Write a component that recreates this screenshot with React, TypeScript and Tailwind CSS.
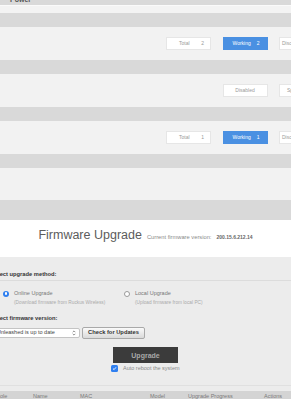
import React from 'react';

interface StatButton {
  label: string;
  count?: number;
  active?: boolean;
  pad?: string;
}

const statRows: StatButton[][] = [
  [
    { label: 'Total', count: 2, pad: 'pl-[12px] pr-[6px]' },
    { label: 'Working', count: 2, active: true, pad: 'pl-[9px] pr-[7px]' },
    { label: 'Disconnected', count: 0, pad: 'pl-[2px] pr-[2px]' },
  ],
  [
    { label: 'Disabled', pad: 'justify-center' },
    { label: 'Spare', pad: 'pl-[7px]' },
  ],
  [
    { label: 'Total', count: 1, pad: 'pl-[12px] pr-[6px]' },
    { label: 'Working', count: 1, active: true, pad: 'pl-[9px] pr-[7px]' },
    { label: 'Disconnected', count: 0, pad: 'pl-[2px] pr-[2px]' },
  ],
];

function Stat({ label, count, active, pad }: StatButton) {
  return (
    <div
      className={`w-[45px] h-[13px] flex items-center overflow-hidden whitespace-nowrap text-[5px] leading-none border ${pad} ${
        active
          ? 'bg-[#4a90e2] border-[#4a90e2] text-white justify-between'
          : 'bg-white border-[#e6e6e6] text-[#9a9a9a] justify-between'
      }`}
    >
      <span>{label}</span>
      {count !== undefined && <span>{count}</span>}
    </div>
  );
}

function Band({ h = 'h-[14px]' }: { h?: string }) {
  return <div className={`${h} bg-[#d9d9d9]`} />;
}

function StatRow({ items }: { items: StatButton[] }) {
  return (
    <div className="h-[33px] flex items-center justify-end gap-[11.5px] pr-[117px] bg-[#f2f2f2]">
      {items.map((b, i) => (
        <Stat key={i} {...b} />
      ))}
    </div>
  );
}

export default function App() {
  return (
    <div className="w-[291px] h-[399px] overflow-hidden bg-[#f2f2f2] font-['Liberation_Sans',Arial,sans-serif]">
      <div className="w-[591px] -ml-[150px]">
        {/* clipped section heading */}
        <div className="h-[5px] bg-[#d9d9d9] overflow-hidden">
          <div className="pl-[160px] -mt-[4px] text-[7px] leading-[8px] font-bold text-[#555]">Power</div>
        </div>
        <div className="h-[8px] bg-[#f3f3f3] border-t border-[#fafafa]" />
        <Band />
        <StatRow items={statRows[0]} />
        <Band />
        <StatRow items={statRows[1]} />
        <Band />
        <StatRow items={statRows[2]} />
        <Band />
        <div className="h-[32px] bg-[#f2f2f2]" />
        <Band h="h-[20px]" />

        {/* title */}
        <div className="h-[37px] bg-white pt-[8px] flex justify-center items-baseline">
          <span className="text-[12.5px] leading-[14px] text-[#5c5c5c]">Firmware Upgrade</span>
          <span className="ml-[5px] text-[5.75px] text-[#8a8a8a]">Current firmware version:</span>
          <span className="ml-[5px] text-[5px] font-bold text-[#666]">200.15.6.212.14</span>
        </div>

        {/* upgrade panel */}
        <div className="bg-[#ececec] pt-[13px] pb-[5px]">
          <div className="pl-[141px]">
            <div className="text-[5.75px] leading-[8px] font-bold text-[#333]">Select upgrade method:</div>
            <div className="mt-[2px] h-px bg-[#dcdcdc]" />

            <div className="mt-[9px] flex pl-[12px]">
              <div className="w-[121px] flex gap-[5px]">
                <div className="mt-[0.5px] w-[6px] h-[6px] rounded-full bg-[#2f7ff0] flex items-center justify-center">
                  <div className="w-[2.5px] h-[2.5px] rounded-full bg-white" />
                </div>
                <div>
                  <div className="text-[5.5px] leading-[7px] text-[#777]">Online Upgrade</div>
                  <div className="mt-[3px] text-[4.75px] leading-[6px] text-[#aaa]">(Download firmware from Ruckus Wireless)</div>
                </div>
              </div>
              <div className="flex gap-[5px]">
                <div className="mt-[0.5px] w-[6px] h-[6px] rounded-full bg-white border border-[#9a9a9a]" />
                <div>
                  <div className="text-[5.5px] leading-[7px] text-[#777]">Local Upgrade</div>
                  <div className="mt-[3px] text-[4.75px] leading-[6px] text-[#aaa]">(Upload firmware from local PC)</div>
                </div>
              </div>
            </div>

            <div className="mt-[8px] text-[5.75px] leading-[8px] font-bold text-[#333]">Select firmware version:</div>

            <div className="mt-[5px] flex items-center gap-[2px] ml-[1px]">
              <div className="w-[88px] h-[10px] bg-white border border-[#c4c4c4] rounded-[2px] flex items-center justify-between pl-[4px] pr-[3px]">
                <span className="text-[5.5px] leading-none text-[#444]">Unleashed is up to date</span>
                <svg width="4" height="6" viewBox="0 0 4 6" fill="none" stroke="#666" strokeWidth="0.7">
                  <path d="M0.7 2.2 L2 0.9 L3.3 2.2" />
                  <path d="M0.7 3.8 L2 5.1 L3.3 3.8" />
                </svg>
              </div>
              <div className="w-[63px] h-[12px] rounded-[2px] border border-[#a9a9a9] bg-gradient-to-b from-[#fafafa] to-[#dadada] flex items-center justify-center">
                <span className="text-[5.75px] leading-none font-bold text-[#333]">Check for Updates</span>
              </div>
            </div>
          </div>

          <div className="mt-[8px] flex justify-center">
            <div className="w-[65px] h-[16px] bg-[#3b3b3b] flex items-center justify-center">
              <span className="text-[7px] leading-none font-bold text-[#a8a8a8]">Upgrade</span>
            </div>
          </div>
          <div className="mt-[2px] flex justify-center items-center gap-[5px]">
            <div className="w-[6.5px] h-[6.5px] rounded-[1.5px] bg-[#2f7ff0] flex items-center justify-center">
              <svg width="5" height="5" viewBox="0 0 5 5" fill="none" stroke="white" strokeWidth="0.9">
                <path d="M1 2.6 L2.1 3.6 L4 1.3" />
              </svg>
            </div>
            <span className="text-[5.5px] leading-[7px] text-[#8a8a8a]">Auto reboot the system</span>
          </div>

          <div className="mt-[13px] h-px bg-[#e0e0e0]" />
        </div>

        {/* table header */}
        <div className="h-[20px] bg-[#d4d4d4] pt-[1px] pl-[146px] grid grid-cols-[37px_47px_70px_38px_76px_auto] text-[5.5px] leading-[8px] text-[#7a7a7a]">
          <span>Role</span>
          <span>Name</span>
          <span>MAC</span>
          <span>Model</span>
          <span>Upgrade Progress</span>
          <span>Actions</span>
        </div>
      </div>
    </div>
  );
}
